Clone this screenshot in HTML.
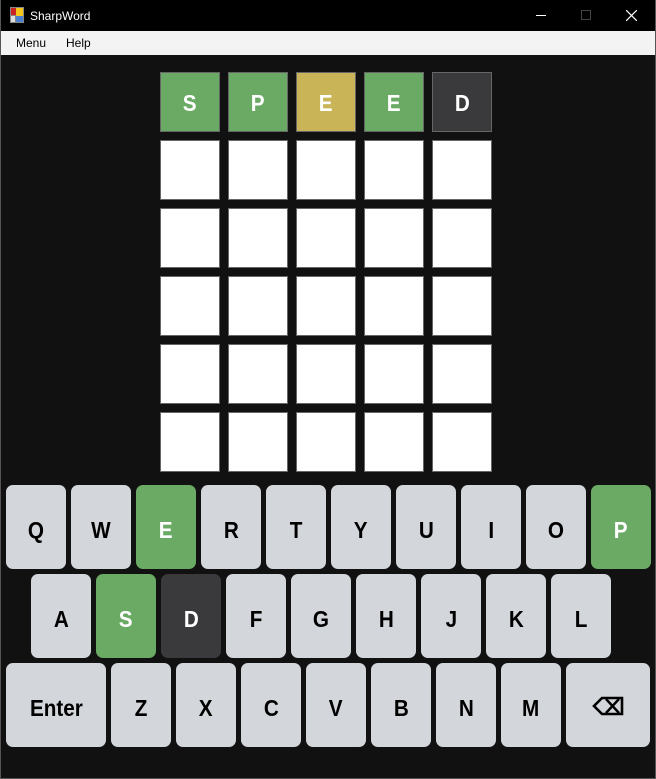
<!DOCTYPE html>
<html><head><meta charset="utf-8"><style>
*{margin:0;padding:0;box-sizing:border-box}
body{width:656px;height:779px;background:#111;position:relative;overflow:hidden;font-family:"Liberation Sans",sans-serif}
.frame{position:absolute;left:0;top:0;width:656px;height:779px;border:1px solid #555;pointer-events:none;border-top:none}
.title{position:absolute;left:0;top:0;width:656px;height:31px;background:#000;color:#fff;font-size:12px}
.title .t{position:absolute;left:30px;top:9px}
.menu{position:absolute;left:1px;top:31px;width:654px;height:24px;background:#f3f3f3;font-size:12px;color:#000}
.menu span{position:absolute;top:5px}
.tile{position:absolute;width:60px;height:60px;border:1px solid #666;background:#fff;color:#fff;font-weight:bold;font-size:23px;display:flex;align-items:center;justify-content:center;padding-top:3px;transform-origin:center}
.tile span,.key span{display:inline-block;transform:scaleX(0.9)}
.key{position:absolute;width:60px;height:84px;border-radius:7px;background:#d3d6da;color:#000;font-weight:bold;font-size:23px;display:flex;align-items:center;justify-content:center;padding-top:6px}
.g{background:#6aaa64;color:#fff}.y{background:#c9b458}.d{background:#3a3a3c;color:#fff}
</style></head><body>
<div class="title">
<svg style="position:absolute;left:10px;top:7px" width="14" height="16" viewBox="0 0 14 16"><rect x="0" y="0" width="14" height="16" fill="#888"/><rect x="1" y="1" width="5" height="7" fill="#c22"/><rect x="6" y="1" width="7" height="8" fill="#f5c518"/><rect x="6" y="9" width="7" height="6" fill="#4a7fd0"/><rect x="1" y="9" width="4" height="6" fill="#ddd"/></svg>
<span class="t">SharpWord</span>
<div style="position:absolute;left:536px;top:15px;width:10px;height:1px;background:#fff"></div>
<div style="position:absolute;left:581px;top:10px;width:10px;height:10px;border:1px solid #444"></div>
<svg style="position:absolute;left:626px;top:10px" width="11" height="11"><path d="M0 0L11 11M11 0L0 11" stroke="#fff" stroke-width="1.2"/></svg>
</div>
<div class="menu"><span style="left:15px">Menu</span><span style="left:65px">Help</span></div>
<div id="b"></div>
<div id="k"></div>
<div class="frame"></div>
<script>
var b=document.getElementById('b'),h='';
var w=[['S','g'],['P','g'],['E','y'],['E','g'],['D','d']];
for(var r=0;r<6;r++)for(var c=0;c<5;c++){
 var cls='tile',t='';
 if(r==0){cls+=' '+w[c][1];t='<span>'+w[c][0]+'</span>';}
 h+='<div class="'+cls+'" style="left:'+(160+68*c)+'px;top:'+(72+68*r)+'px">'+t+'</div>';}
b.innerHTML=h;
var k='',rows=[['QWERTYUIOP',6,485],['ASDFGHJKL',31,574]];
var col={E:'g',P:'g',S:'g',D:'d'};
rows.forEach(function(R){for(var i=0;i<R[0].length;i++){var L=R[0][i];
 k+='<div class="key '+(col[L]||'')+'" style="left:'+(R[1]+65*i)+'px;top:'+R[2]+'px"><span>'+L+'</span></div>';}});
k+='<div class="key" style="left:6px;top:663px;width:100px"><span>Enter</span></div>';
var z='ZXCVBNM';for(var i=0;i<7;i++)k+='<div class="key" style="left:'+(111+65*i)+'px;top:663px"><span>'+z[i]+'</span></div>';
k+='<div class="key" style="left:566px;top:663px;width:84px;padding-top:2px"><svg width="32" height="20" viewBox="0 0 32 20"><path d="M10 2H30V18H10L2 10Z" fill="none" stroke="#000" stroke-width="2.6"/><path d="M14 3L27 17M27 3L14 17" stroke="#000" stroke-width="2.4"/></svg></div>';
document.getElementById('k').innerHTML=k;
</script>
</body></html>
